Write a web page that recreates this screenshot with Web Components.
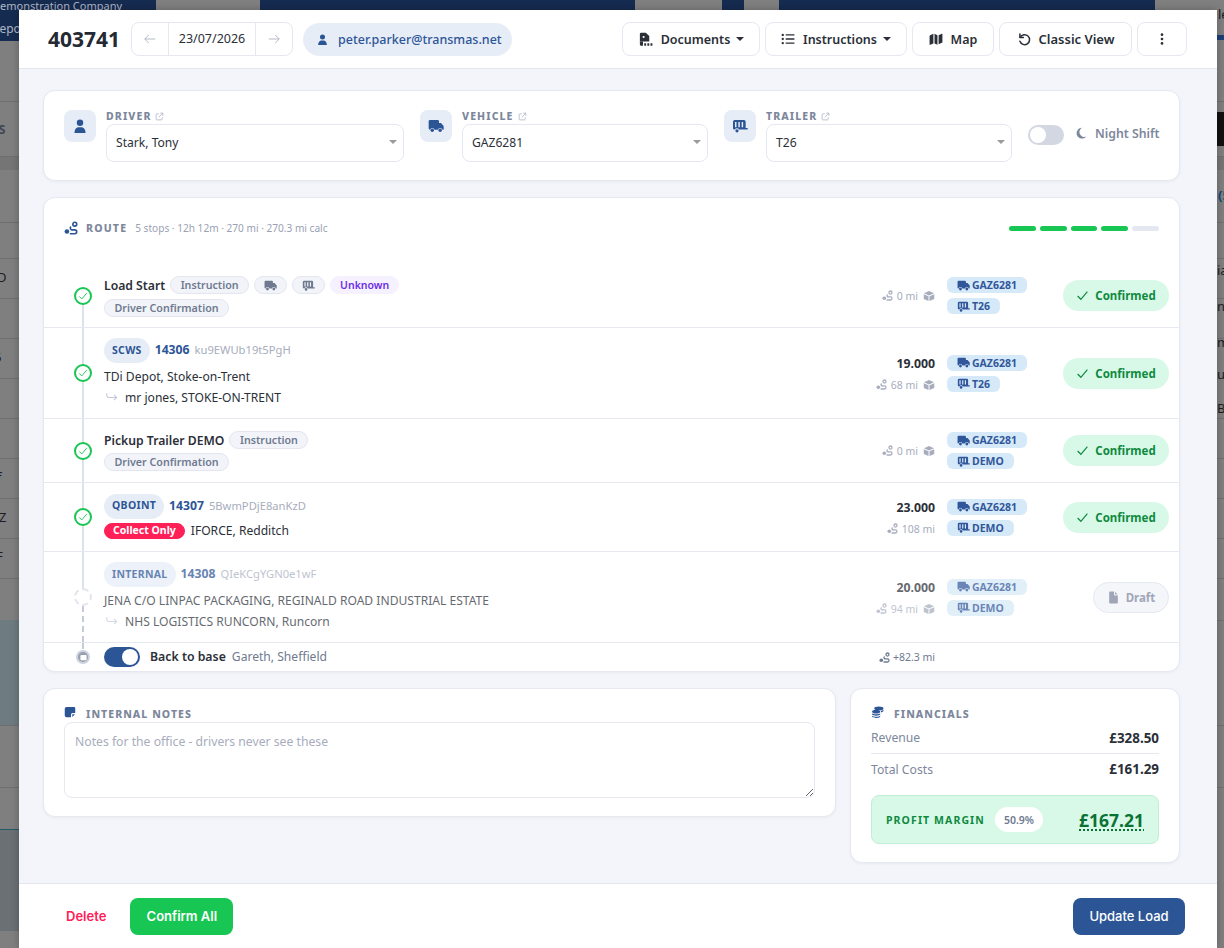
<!DOCTYPE html>
<html lang="en"><head><meta charset="utf-8"><title>Load 403741</title>
<style>
html,body{margin:0;padding:0;height:948px;overflow:hidden;background:#7f7f7f}
body{font-family:"Noto Sans",sans-serif;color:#2b2f38;position:relative}
x-stop .t{display:flex;align-items:center;gap:5px;height:18px}
x-stop .t2{margin-top:5px}
x-stop .name{font-size:12.200px;font-weight:600;color:#2b2f38;white-space:nowrap}
x-stop .addr{font-size:12.100px;line-height:20px;color:#2b2f38;white-space:nowrap}
x-stop .addr.to{display:flex;align-items:center;gap:6px;margin-top:1px;padding-left:1px}
x-stop .addr.col{display:flex;align-items:center;gap:6px;height:16px;margin-top:1px;margin-bottom:2px}
x-stop .base{display:flex;align-items:center;gap:10px;font-size:12.100px;white-space:nowrap;margin-bottom:1px}
x-stop .base b{font-size:12.300px;font-weight:600;margin-right:-5px}
x-stop .base span{color:#6f7a90;margin-left:1px}
</style></head><body>
<x-backdrop></x-backdrop>
<x-modal>
  <x-head slot="head"></x-head>
  <x-resources></x-resources>
  <x-route>
    <x-stop state="done" h="64" first>
      <div class="t" style="margin-top:2px"><b class="name">Load Start</b><x-pill>Instruction</x-pill><x-pill><x-icon n="truck" s="13" style="margin:0 -.5px"></x-icon></x-pill><x-pill><x-icon n="trailer" s="13" style="margin:0 -.5px"></x-icon></x-pill><x-pill kind="violet">Unknown</x-pill></div>
      <div class="t t2"><x-pill>Driver Confirmation</x-pill></div>
      <x-miles slot="weight" mi="0 mi" box></x-miles>
      <x-plates slot="plates" v="GAZ6281" t="T26"></x-plates>
      <x-status slot="status">Confirmed</x-status>
    </x-stop>
    <x-stop state="done" h="91">
      <x-ref code="SCWS" num="14306" key="ku9EWUb19t5PgH"></x-ref>
      <div class="addr">TDi Depot, Stoke-on-Trent</div>
      <div class="addr to"><x-icon n="turn" s="14" c="#c3c8d6"></x-icon>mr jones, STOKE-ON-TRENT</div>
      <x-miles slot="weight" w="19.000" mi="68 mi" box></x-miles>
      <x-plates slot="plates" v="GAZ6281" t="T26"></x-plates>
      <x-status slot="status">Confirmed</x-status>
    </x-stop>
    <x-stop state="done" h="64">
      <div class="t" style="margin-top:1px"><b class="name">Pickup Trailer DEMO</b><x-pill>Instruction</x-pill></div>
      <div class="t t2" style="margin-top:4px"><x-pill>Driver Confirmation</x-pill></div>
      <x-miles slot="weight" mi="0 mi" box></x-miles>
      <x-plates slot="plates" v="GAZ6281" t="DEMO"></x-plates>
      <x-status slot="status">Confirmed</x-status>
    </x-stop>
    <x-stop state="done" h="69">
      <x-ref code="QBOINT" num="14307" key="5BwmPDjE8anKzD"></x-ref>
      <div class="addr col"><x-pill kind="red">Collect Only</x-pill>IFORCE, Redditch</div>
      <x-miles slot="weight" w="23.000" mi="108 mi"></x-miles>
      <x-plates slot="plates" v="GAZ6281" t="DEMO"></x-plates>
      <x-status slot="status">Confirmed</x-status>
    </x-stop>
    <x-stop state="draft" h="91">
      <x-ref code="INTERNAL" num="14308" key="QIeKCgYGN0e1wF"></x-ref>
      <div class="addr">JENA C/O LINPAC PACKAGING, REGINALD ROAD INDUSTRIAL ESTATE</div>
      <div class="addr to"><x-icon n="turn" s="14" c="#c3c8d6"></x-icon>NHS LOGISTICS RUNCORN, Runcorn</div>
      <x-miles slot="weight" w="20.000" mi="94 mi" box></x-miles>
      <x-plates slot="plates" v="GAZ6281" t="DEMO"></x-plates>
      <x-status slot="status" kind="draft">Draft</x-status>
    </x-stop>
    <x-stop state="base" h="28" last>
      <div class="base"><x-toggle on></x-toggle><b>Back to base</b><span>Gareth, Sheffield</span></div>
      <x-miles slot="weight" mi="+82.3 mi" dark></x-miles>
    </x-stop>
  </x-route>
  <x-lower></x-lower>
  <x-foot slot="foot"></x-foot>
</x-modal>
<script>
const ICONS={
user:'<circle cx="12" cy="6.500" r="5.500"/><path d="M2.500 24c0-6.500 3.500-10 7-10h5c3.500 0 7 3.500 7 10z"/>',
truck:'<path d="M1 5a2 2 0 0 1 2-2h11.500a2 2 0 0 1 2 2v2.500h3L23.500 12v5.500h-1.800a3.600 3.600 0 0 0-6.900 0H9.900a3.600 3.600 0 0 0-6.900 0A2 2 0 0 1 1 15.500z"/><circle cx="6.400" cy="18.500" r="2.600"/><circle cx="18.200" cy="18.500" r="2.600"/>',
trailer:'<path fill-rule="evenodd" d="M4 3h14a2.500 2.500 0 0 1 2.500 2.500V15H23.500v2.400H10.600a3.400 3.400 0 0 0-6.200 0H3.500a2 2 0 0 1-2-2V5.500A2.500 2.500 0 0 1 4 3zM4.500 6v8h2.200V6zM9.500 6v8h2.200V6zM14.500 6v8h2.200V6z"/><circle cx="7.500" cy="19.200" r="2.400"/>',
pdf:'<path d="M5 1h7.500L18 6.500V15H3V3a2 2 0 0 1 2-2z"/><circle cx="9" cy="8" r="1.700" fill="#fff"/><path d="M3 15v5a2 2 0 0 0 2 2h3v-7zM10 18h3v4h-3zM15 18h3v4h-3zM20 18h3v4h-3z"/>',
list:'<circle cx="3" cy="5" r="2"/><circle cx="3" cy="12" r="2"/><circle cx="3" cy="19" r="2"/><path d="M8 3.800h15v2.400H8zM8 10.800h15v2.400H8zM8 17.800h15v2.400H8z"/>',
map:'<path d="M2 5.500 7.500 3v16.500L2 22a.7.7 0 0 1-1-.7V7zM9.500 3l5 2.500V22l-5-2.500zM16.500 5.500 22 3a.7.7 0 0 1 1 .7V18l-6.500 3z"/>',
undo:'<path d="M5 3.500v6h6" fill="none" stroke="currentColor" stroke-width="2.600" stroke-linecap="round" stroke-linejoin="round"/><path d="M5.600 9A8.500 8.500 0 1 1 5 16" fill="none" stroke="currentColor" stroke-width="2.600" stroke-linecap="round"/>',
dots:'<circle cx="12" cy="4.500" r="2.300"/><circle cx="12" cy="12" r="2.300"/><circle cx="12" cy="19.500" r="2.300"/>',
moon:'<path d="M14.500 1.500A10.800 10.800 0 1 0 22.500 19 9.500 9.500 0 0 1 14.500 1.500z"/>',
ext:'<path d="M10 5H5a2 2 0 0 0-2 2v12a2 2 0 0 0 2 2h12a2 2 0 0 0 2-2v-5M14 3h7v7M21 3 10 14" fill="none" stroke="currentColor" stroke-width="2"/>',
left:'<path d="M21 12H3M10 5l-7 7 7 7" fill="none" stroke="currentColor" stroke-width="1.500"/>',
right:'<path d="M3 12h18M14 5l7 7-7 7" fill="none" stroke="currentColor" stroke-width="1.500"/>',
route:'<circle cx="5" cy="18" r="4"/><circle cx="18.500" cy="5.500" r="3.300" fill="none" stroke="currentColor" stroke-width="2.800"/><path d="M10 21.800h8.500a3.300 3.300 0 0 0 0-6.600h-4.300a3 3 0 0 1-2-5.500" fill="none" stroke="currentColor" stroke-width="2.800"/>',
box:'<path d="M12 2l10 4.400-10 4.400L2 6.400zM1.500 8.300l9.500 4.200v9.500l-9.500-4.200zM22.500 8.300 13 12.500V22l9.500-4.200z"/>',
check:'<path d="M3 13l6 6L21 5" fill="none" stroke="currentColor" stroke-width="2.200"/>',
turn:'<path d="M3 4v3.500A3.500 3.500 0 0 0 6.500 11H20M15.500 6.500 20 11l-4.500 4.500" fill="none" stroke="currentColor" stroke-width="1.800"/>',
note:'<path d="M5 2h15a2.500 2.500 0 0 1 2.500 2.500V14H17a3 3 0 0 0-3 3v5.500H5A3.500 3.500 0 0 1 1.500 19V5.500A3.500 3.500 0 0 1 5 2zM16.500 16.500H22L16.500 22z"/>',
coins:'<ellipse cx="14.500" cy="4.500" rx="8.500" ry="3.500"/><path d="M2 10.500c0-1.900 3.300-3.400 7.500-3.400s7.500 1.500 7.500 3.400-3.300 3.400-7.500 3.400S2 12.400 2 10.500zM18.200 8.900c2-.3 3.800-1 4.800-2v2.500c-.8 1.400-2.600 2.100-4.500 2.400zM2 13.300c2.500 2.300 12.500 2.300 15 0v2.500c-2 2.800-13 2.800-15 0zM2 18c2.500 2.300 12.500 2.300 15 0v2c-2 2.900-13 2.900-15 0z"/>',
doc:'<path d="M6 1h7v6a1.500 1.500 0 0 0 1.500 1.500H20V21a2 2 0 0 1-2 2H6a2 2 0 0 1-2-2V3a2 2 0 0 1 2-2zM15 1.500 19.500 6.500H15z"/>',
base:'<rect x="4" y="5" width="16" height="14" rx="2"/><path d="M4 10h16M4 14h16" stroke="#fff" stroke-width="1.200"/>'
};
function def(name,css,html,extra){
  customElements.define(name,class extends HTMLElement{
    constructor(){super();this.attachShadow({mode:'open'})}
    connectedCallback(){
      const a=n=>this.getAttribute(n);
      const h=typeof html==='function'?html(a,this):html;
      this.shadowRoot.innerHTML='<style>'+css+'</style>'+h;
      if(extra)extra(this);
    }
  });
}
def('x-icon',':host{display:inline-flex;flex:none;line-height:0}svg{display:block}',a=>{
  const s=a('s')||14,c=a('c')||'currentColor';
  return `<svg width="${s}" height="${s}" viewBox="0 0 24 24" fill="${c}" style="color:${c}">${ICONS[a('n')]||''}</svg>`;
});
def('x-backdrop',`
:host{position:absolute;inset:0;display:block;background:#7f7f7f;overflow:hidden;font:13px "Noto Sans",sans-serif;color:#1b1d22}
.a{position:absolute}
.l{position:absolute;left:0;right:0;height:1px;background:#6f6f6f}
`,()=>{
 const lines=[101,156,222,258,298,338,378,418,458,498,538,578,620,725,787].map(y=>`<i class="l" style="top:${y}px"></i>`).join('');
 return `<div class="a" style="left:0;top:0;right:0;height:41px;background:#162b50"></div>
 <div class="a" style="left:156px;top:0;width:104px;height:10px;background:#808080"></div>
 <div class="a" style="left:635px;top:0;width:87px;height:10px;background:#808080"></div>
 <div class="a" style="left:744px;top:0;width:35px;height:10px;background:#808080"></div>
 <div class="a" style="left:1155px;top:0;right:0;height:41px;background:#808080"></div>
 <div class="a" style="left:1217px;top:35px;right:0;height:5px;background:#1e3f78"></div>
 <div class="a" style="left:0;top:156px;right:0;height:14px;background:#757575"></div>
 ${lines}
 <div class="a" style="left:0;top:620px;width:19px;height:105px;background:#6e7b80"></div>
 <div class="a" style="left:0;top:829px;width:19px;height:101px;background:#6b7075;border-top:1px solid #1e5c66"></div>
 <div class="a" style="left:1217px;top:112px;right:0;height:34px;background:#111"></div>
 <span class="a" style="left:-8px;top:-2px;font-size:11px;color:#aeb6c6;white-space:nowrap">Demonstration Company</span>
 <span class="a" style="left:-8px;top:20px;font-size:12px;color:#aeb6c6">Repo</span>
 <span class="a" style="left:-6px;top:62px">s</span>
 <b class="a" style="left:-8px;top:121px;font-size:12px;color:#3e4654">ES</b>
 <span class="a" style="left:-3px;top:268px">D</span>
 <span class="a" style="left:-6px;top:348px">6</span>
 <span class="a" style="left:-3px;top:468px">f</span>
 <span class="a" style="left:-7px;top:508px">zZ</span>
 <span class="a" style="left:-4px;top:547px">F</span>
 <span class="a" style="left:1218px;top:5px">le</span>
 <b class="a" style="left:1218px;top:186px;color:#0f4a78">(5</b>
 <span class="a" style="left:1217px;top:261px">ia</span>
 <span class="a" style="left:1217px;top:297px">ne</span>
 <span class="a" style="left:1217px;top:333px">m</span>
 <span class="a" style="left:1217px;top:365px">ut</span>
 <span class="a" style="left:1217px;top:399px">B</span>`;
});
def('x-modal',`
:host{position:absolute;left:19px;top:10px;width:1198px;height:938px;display:flex;flex-direction:column;background:#f3f5fa;box-shadow:0 0 8px rgba(0,0,0,.25)}
main{flex:1;min-height:0;padding:21px 37px 0 24px;display:flex;flex-direction:column;gap:16px}
`,'<slot name="head"></slot><main><slot></slot></main><slot name="foot"></slot>');
def('x-btn',`
:host{display:inline-flex}
div{height:34px;box-sizing:border-box;display:flex;align-items:center;gap:8px;border:1px solid #e5e8f1;border-radius:8px;background:#fff;font-size:12.500px;font-weight:600;color:#2b2f38;white-space:nowrap}
.c{width:0;height:0;border-left:4.500px solid transparent;border-right:4.500px solid transparent;border-top:4.500px solid #2b2f38;margin-left:-2px}
`,a=>`<div style="width:${a('w')}px;justify-content:center;${a('fs')?'font-size:'+a('fs')+'px':''}">${a('i')?`<x-icon n="${a('i')}" s="${a('is')||14}"></x-icon>`:''}<slot></slot>${a('caret')!==null?'<i class="c"></i>':''}</div>`);
def('x-head',`
:host{display:flex;align-items:center;height:58px;background:#fff;border-bottom:1px solid #e3e6ef;padding:0 30px 0 29px;flex:none;box-sizing:content-box}
h1{font-size:21px;font-weight:700;margin:0;color:#252933;width:83px}
.date{display:flex;height:34px;box-sizing:border-box;border:1px solid #e5e8f1;border-radius:8px;align-items:center;width:162px}
.date>span{flex:1;text-align:center;font-size:12.500px;height:100%;line-height:32px;border:solid #e5e8f1;border-width:0 1px;color:#2b2f38}
.date>x-icon{width:36px;justify-content:center;color:#a9afbe}
.user{margin-left:10px;height:33px;border-radius:17px;background:#e7edf7;color:#2c5596;display:flex;align-items:center;gap:10px;padding:0 13px 0 14px;font-size:12.500px;font-weight:500;width:182px}
.sp{flex:1}
.btns{display:flex;gap:5px}
`,`<h1>403741</h1>
<div class="date"><x-icon n="left" s="14"></x-icon><span>23/07/2026</span><x-icon n="right" s="14"></x-icon></div>
<div class="user"><x-icon n="user" s="11"></x-icon>peter.parker@transmas.net</div>
<div class="sp"></div>
<div class="btns">
<x-btn i="pdf" is="15" w="138" caret>Documents</x-btn>
<x-btn i="list" w="142" caret>Instructions</x-btn>
<x-btn i="map" w="82" is="14">Map</x-btn>
<x-btn i="undo" w="133" is="14" fs="13">Classic View</x-btn>
<x-btn i="dots" w="50"></x-btn>
</div>`);
def('x-select',`
:host{display:block;flex:none}
.l{display:flex;align-items:center;gap:4px;height:12px;font-size:10.500px;font-weight:800;letter-spacing:1.100px;color:#7d879c;margin-bottom:2px}
.s{height:38px;box-sizing:border-box;border:1px solid #e5e8f1;border-radius:8px;display:flex;align-items:center;justify-content:space-between;padding:0 6px 2px 9px;font-size:12.100px;color:#2b2f38}
.c{width:0;height:0;border-left:4px solid transparent;border-right:4px solid transparent;border-top:4.500px solid #9a9a9a}
`,a=>`<div class="l">${a('label')}<x-icon n="ext" s="9" c="#a9afbe"></x-icon></div><div class="s" style="width:${a('w')}px">${a('value')}<i class="c"></i></div>`);
def('x-tile',`:host{display:flex;flex:none;width:32px;height:32px;border-radius:8px;background:#e7edf7;color:#2c5596;align-items:center;justify-content:center}`,a=>`<x-icon n="${a('n')}" s="${a('s')||14}"></x-icon>`);
def('x-toggle',`
:host{display:inline-flex;flex:none}
i{display:block;width:36px;height:20px;border-radius:10px;background:#d2d7e2;position:relative;box-sizing:border-box}
i::after{content:"";position:absolute;left:2px;top:2px;width:16px;height:16px;border-radius:50%;background:#fff}
i.on{background:#2c5596}
i.on::after{left:auto;right:2px}
`,a=>`<i class="${a('on')!==null?'on':''}"></i>`);
def('x-resources',`
:host{display:flex;align-items:flex-start;background:#fff;border:1px solid #e5e8f1;border-radius:12px;padding:19px 0 17px 20px;height:91px;box-sizing:border-box;box-shadow:0 1px 3px rgba(30,40,80,.05)}
x-tile{margin-right:10px}
x-select{margin-right:16px}
.night{display:flex;align-items:center;margin-top:13px;gap:11px;color:#7d879c;font-size:12.300px;font-weight:600;white-space:nowrap}
.night x-icon{margin-right:-3px;margin-top:-2px}
.night span{margin-top:-2px}
.night x-toggle{margin-top:2px}
`,`<x-tile n="user"></x-tile><x-select label="DRIVER" value="Stark, Tony" w="298"></x-select>
<x-tile n="truck" s="16"></x-tile><x-select label="VEHICLE" value="GAZ6281" w="246"></x-select>
<x-tile n="trailer" s="16"></x-tile><x-select label="TRAILER" value="T26" w="246"></x-select>
<div class="night"><x-toggle></x-toggle><x-icon n="moon" s="12" c="#7d879c"></x-icon><span>Night Shift</span></div>`);
def('x-route',`
:host{display:block;background:#fff;border:1px solid #e5e8f1;border-radius:12px;box-shadow:0 1px 3px rgba(30,40,80,.05);flex:none}
header{height:66px;display:flex;align-items:center;padding:0 20px 6px 20px;color:#2c5596;box-sizing:border-box}
b{font-size:10.500px;letter-spacing:1.200px;color:#7d879c;margin-left:8px;font-weight:800}
small{font-size:10.100px;color:#9aa1b3;margin-left:8px}
.p{margin-left:auto;display:flex;gap:4px;width:150px}
.p i{display:block;flex:1;height:5px;border-radius:3px;background:#18c653}
.p i:last-child{background:#e5e8f1}
`,`<header><x-icon n="route" s="14"></x-icon><b>ROUTE</b><small>5 stops · 12h 12m · 270 mi · 270.3 mi calc</small><div class="p"><i></i><i></i><i></i><i></i><i></i></div></header><slot></slot>`);
def('x-stop',`
:host{display:grid;grid-template-columns:60px 1fr 126px 116px 106px;padding-right:10px;box-sizing:border-box;border-bottom:1px solid #e5e8f1;align-items:center}
:host([last]){border-bottom:0}
.rail{align-self:stretch;display:flex;flex-direction:column;align-items:center;padding-left:18px}
.seg{flex:1;width:2px;background:#dde1ec}
.seg.none{background:transparent}
.seg.dash{background:repeating-linear-gradient(#c4cad8 0 6px,transparent 6px 10px)}
.dot{flex:none;width:18px;height:18px;box-sizing:border-box;border-radius:50%;border:2px solid #18c653;background:#fff;display:flex;align-items:center;justify-content:center;color:#18c653}
.dot.draft{border:2px dashed #e2e5ee}
.dot.base{width:14px;height:14px;background:#98a0b0;border:2px solid #cdd2de;color:#fff}
.main{min-width:0}
.w{display:block;justify-self:end;padding-right:12px}
.dim{opacity:.72}
`,a=>{
  const st=a('state');
  const dot=st==='done'?'<div class="dot"><x-icon n="check" s="10"></x-icon></div>':st==='draft'?'<div class="dot draft"></div>':'<div class="dot base"><x-icon n="base" s="9"></x-icon></div>';
  const top=a('first')!==null?'seg none':st==='base'?'seg dash':'seg';
  const bot=st==='draft'?'seg dash':st==='base'?'seg none':'seg';
  const dim=st==='draft'?' dim':'';
  return `<div class="rail"><i class="${top}"></i>${dot}<i class="${bot}"></i></div>
  <div class="main${dim}"><slot></slot></div>
  <div class="w${dim}"><slot name="weight"></slot></div>
  <div class="${dim.trim()}"><slot name="plates"></slot></div>
  <div><slot name="status"></slot></div>`;
},el=>{el.style.height=el.getAttribute('h')+'px';});
def('x-pill',`
:host{display:inline-flex;align-items:center;height:18px;box-sizing:border-box;padding:0 9.500px;border-radius:9px;background:#f2f4f9;border:1px solid #e3e6ef;font-size:10.700px;font-weight:600;color:#6f7a90;white-space:nowrap;line-height:1}
:host([kind=violet]){background:#f5f1ff;border-color:#f5f1ff;color:#6d2ee8;font-size:10.500px;padding:0 9px}
:host([kind=red]){background:#ff2058;border-color:#ff2058;color:#fff;height:16px;padding:0 8px;font-size:10.500px;font-weight:700}
`,'<slot></slot>');
def('x-ref',`
:host{display:flex;align-items:center;gap:5px;height:25px;margin-bottom:4px}
.c{height:25px;box-sizing:border-box;padding:0 8px 2px;border-radius:13px;background:#e7edf7;color:#2c5596;font-size:10.500px;font-weight:700;letter-spacing:.3px;display:flex;align-items:center}
b{font-size:12.200px;color:#2c5596;font-weight:700;padding-bottom:2px}
span{font-size:11.200px;color:#a7adbd;padding-bottom:2px}
`,a=>`<div class="c">${a('code')}</div><b>${a('num')}</b><span>${a('key')}</span>`);
def('x-miles',`
:host{display:flex;flex-direction:column;align-items:flex-end;gap:6px}
b{font-size:12.300px;font-weight:700;color:#2b2f38;line-height:17px}
.m{display:flex;align-items:center;gap:4px;font-size:10.500px;color:#a7adbd;line-height:14px}
.m.dark{color:#6f7a90;gap:3px}
`,a=>`${a('w')?`<b>${a('w')}</b>`:''}<div class="m${a('dark')!==null?' dark':''}"><x-icon n="route" s="11" c="${a('dark')!==null?'#6f7a90':'#a7adbd'}"></x-icon>${a('mi')}${a('box')!==null?'<x-icon n="box" s="12" c="#a7adbd" style="margin-left:1px"></x-icon>':''}</div>`);
def('x-plates',`
:host{display:flex;flex-direction:column;align-items:flex-start;gap:5px}
div{display:flex;align-items:center;gap:2px;height:16px;padding:0 10px;border-radius:6px;background:#d6e9f8;color:#31579b;font-size:10.500px;font-weight:700}
`,a=>`<div><x-icon n="truck" s="13"></x-icon>${a('v')}</div><div><x-icon n="trailer" s="13"></x-icon>${a('t')}</div>`);
def('x-status',`
:host{display:flex;justify-content:flex-end}
div{height:31px;box-sizing:border-box;border-radius:16px;display:flex;align-items:center;justify-content:center;gap:6px;font-size:11.500px;font-weight:700}
.ok{width:106px;background:#d9f9e8;color:#0e8a3f}
.draft{width:76px;background:#f5f6fa;border:1px solid #e6e8f0;color:#a0a6b8}
`,a=>a('kind')==='draft'?`<div class="draft"><x-icon n="doc" s="13"></x-icon><slot></slot></div>`:`<div class="ok"><x-icon n="check" s="13"></x-icon><slot></slot></div>`);
def('x-lower',`
:host{display:grid;grid-template-columns:793px 330px;gap:14px;align-items:start;font-family:"Noto Sans",sans-serif}
section{background:#fff;border:1px solid #e5e8f1;border-radius:12px;box-shadow:0 1px 3px rgba(30,40,80,.05);box-sizing:border-box;padding:0 20px}
.ttl{display:flex;align-items:center;gap:10px;height:33px;padding-top:17px;box-sizing:border-box;color:#2c5596}
.ttl b{font-size:10.500px;letter-spacing:1.050px;color:#7d879c;font-weight:800}
.notes{height:129px}
.ttl x-icon{margin-top:-4px}
textarea{display:block;width:751px;height:76px;box-sizing:border-box;border:1px solid #e5e8f1;border-radius:8px;padding:10px;margin:0;font:12.200px "Noto Sans",sans-serif;color:#2b2f38;outline:none;background:#fff}
textarea::placeholder{color:#a7adbd;opacity:1}
.fin{height:175px}
.r{display:flex;justify-content:space-between;align-items:center;font-size:12.200px;color:#7d879c;height:30px}
.r b{font-size:13.400px;color:#2b2f38;font-weight:700}
.r.one{height:32px;padding-bottom:0;border-bottom:1px solid #e5e8f1;box-sizing:border-box}
.m{height:49px;box-sizing:border-box;margin-top:11px;border:1px solid #bfeed5;border-radius:8px;background:#d9f9e8;display:flex;align-items:center;padding:0 14px}
.m span{font-size:10.500px;font-weight:700;letter-spacing:1.100px;color:#0e8a3f;white-space:nowrap}
.m i{font-style:normal;margin-left:10px;height:25px;width:48px;border-radius:13px;background:#fff;color:#6f7a90;font-size:10.500px;font-weight:600;display:flex;align-items:center;justify-content:center}
.m b{margin-left:auto;font-size:17.500px;font-weight:700;color:#0b7235;text-decoration:underline dotted;text-underline-offset:3px;text-decoration-thickness:1.500px}
`,`<section class="notes"><div class="ttl"><x-icon n="note" s="12"></x-icon><b>INTERNAL NOTES</b></div><textarea placeholder="Notes for the office - drivers never see these" aria-label="Internal notes"></textarea></section>
<section class="fin"><div class="ttl"><x-icon n="coins" s="13"></x-icon><b>FINANCIALS</b></div>
<div class="r one">Revenue<b>£328.50</b></div><div class="r">Total Costs<b>£161.29</b></div>
<div class="m"><span>PROFIT MARGIN</span><i>50.9%</i><b>£167.21</b></div></section>`);
def('x-foot',`
:host{display:flex;align-items:center;flex:none;height:65px;box-sizing:border-box;background:#fff;border-top:1px solid #e3e6ef;padding:0 32px 0 47px;font-family:Inter,sans-serif;font-size:13px;font-weight:600}
.d{color:#ff2058}
a{display:flex;align-items:center;justify-content:center;height:37px;border-radius:8px;color:#fff}
.c{margin-left:24px;width:103px;background:#18c653}
.u{margin-left:auto;width:112px;background:#2c5596;font-weight:500}
`,`<span class="d">Delete</span><a class="c">Confirm All</a><a class="u">Update Load</a>`);
</script>
</body></html>
